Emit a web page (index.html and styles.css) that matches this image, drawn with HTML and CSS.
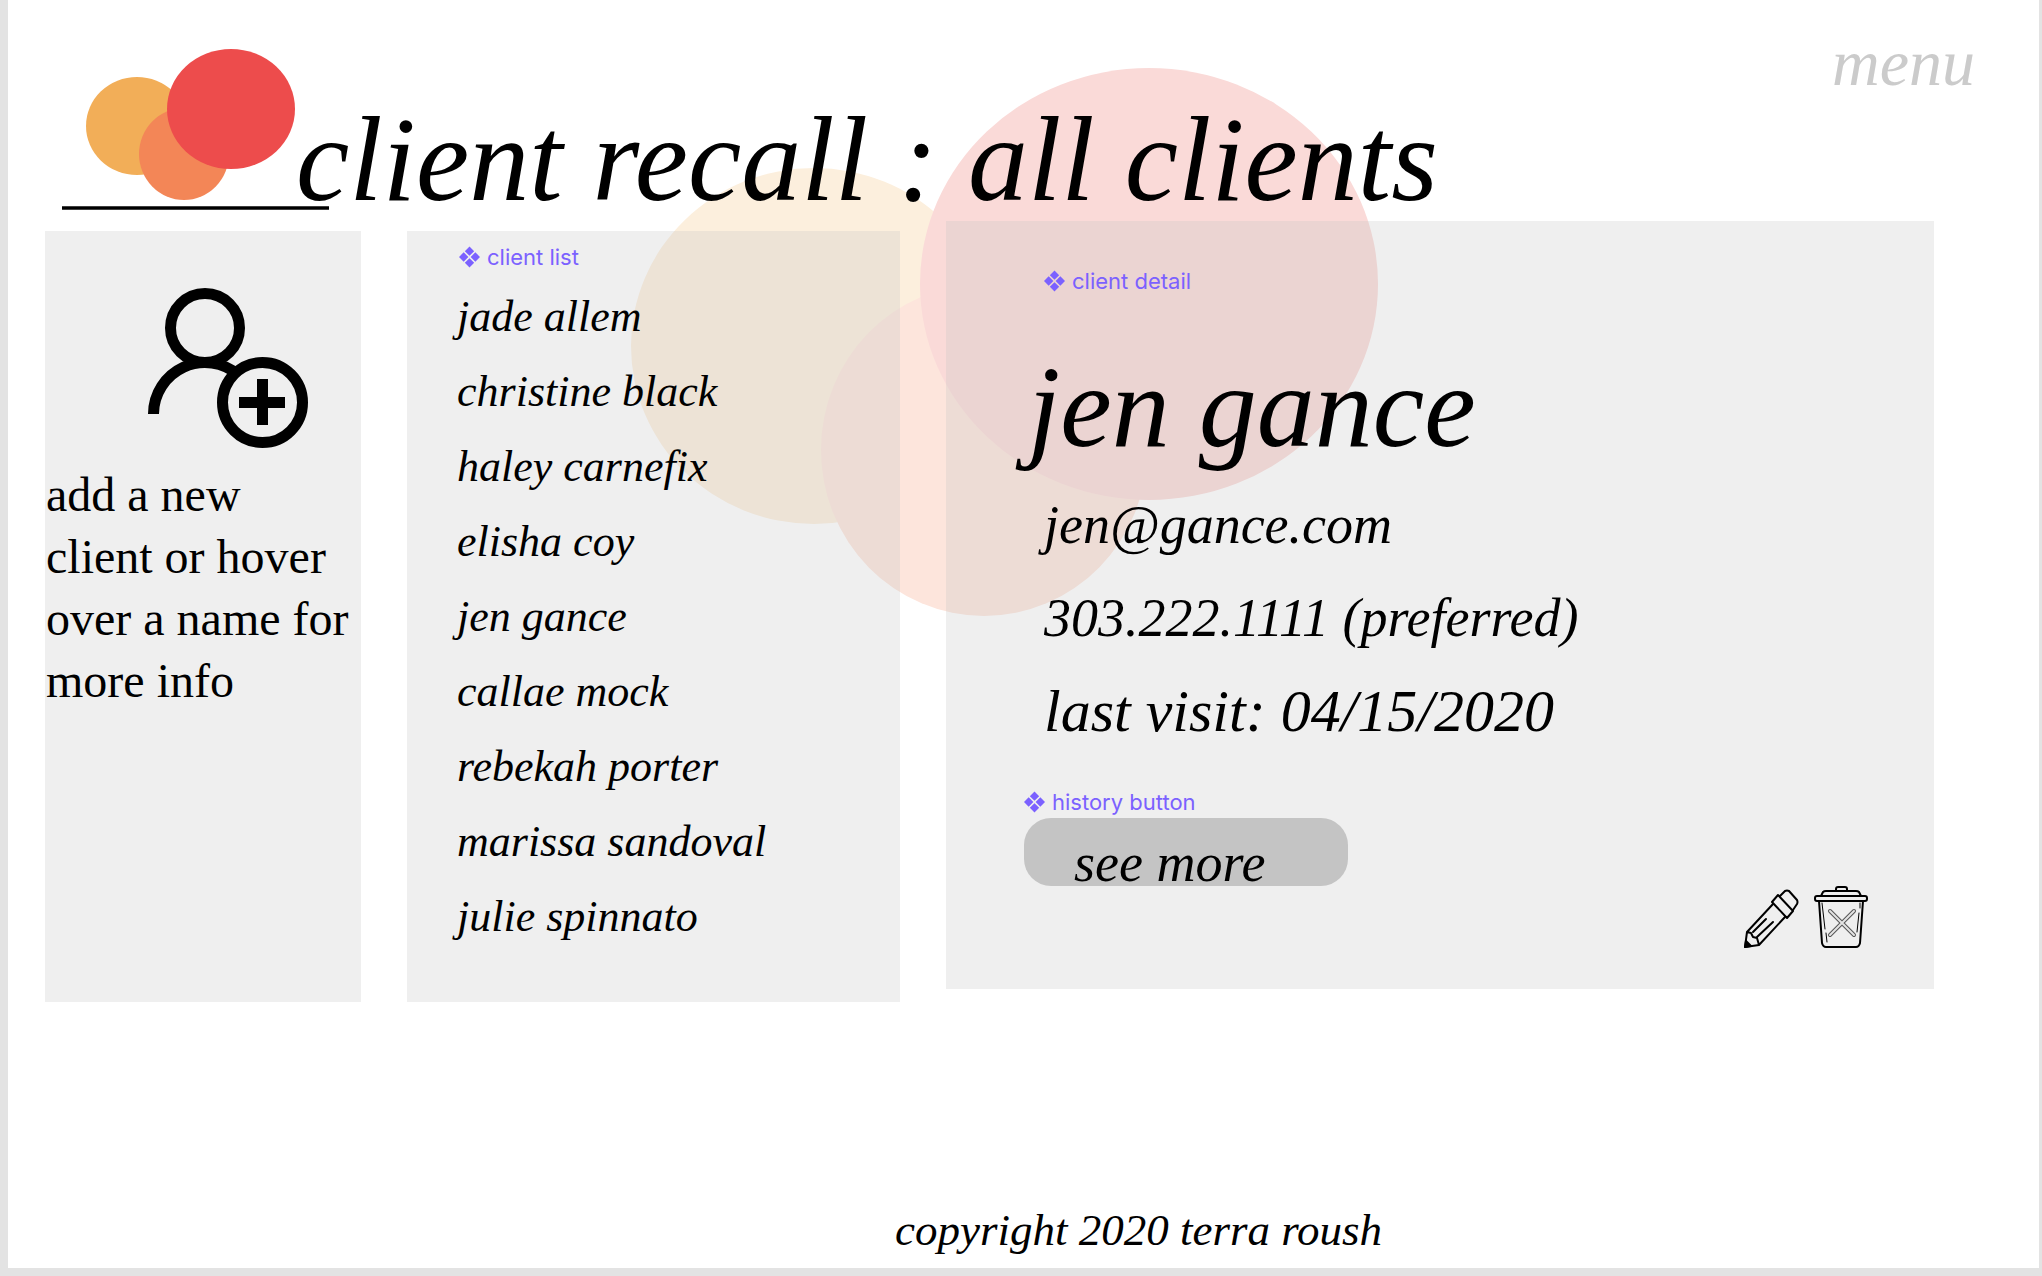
FILE: index.html
```html
<!DOCTYPE html>
<html lang="en">
<head>
<meta charset="utf-8">
<title>client recall : all clients</title>
<link rel="stylesheet" href="styles.css">
</head>
<body>
<svg width="0" height="0" class="defs" aria-hidden="true">
  <symbol id="component" viewBox="0 0 22 22">
    <path d="M11 0l4.900 4.900L11 9.800 6.100 4.900zM11 12.200l4.900 4.900L11 22l-4.900-4.900zM4.900 6.100L9.800 11l-4.900 4.900L0 11zM17.100 6.100L22 11l-4.900 4.900L12.200 11z"/>
  </symbol>
</svg>
<div class="page">
  <svg class="backdrop" viewBox="0 0 760 560" aria-hidden="true">
    <ellipse cx="185" cy="286" rx="183" ry="178" fill="#fcefdd"/>
    <ellipse cx="355" cy="390" rx="163" ry="166" fill="#fde5dc"/>
    <ellipse cx="520" cy="224" rx="229" ry="216" fill="#fadad8"/>
  </svg>
  <header class="header">
    <svg class="logo" viewBox="0 0 268 164" role="img" aria-label="client recall logo">
      <ellipse cx="75" cy="78" rx="51" ry="49" fill="#f2ae58"/>
      <ellipse cx="122" cy="106" rx="45" ry="46" fill="#f38657"/>
      <ellipse cx="169" cy="61" rx="64" ry="60" fill="#ed4c4c"/>
      <path d="M0 160h267" stroke="#000" stroke-width="3.400"/>
    </svg>
    <h1 class="title">client recall : all clients</h1>
    <a class="menu" href="#menu">menu</a>
  </header>
  <main class="board">
    <section class="panel intro">
      <button class="add" type="button" aria-label="add client">
        <svg viewBox="0 0 164 164" width="164" height="164" fill="none" stroke="#000" stroke-width="11">
          <circle cx="59" cy="42" r="34.500"/>
          <path d="M7.500 128a51.500 51.500 0 0 1 85-39"/>
          <circle cx="116.500" cy="116.500" r="40"/>
          <path d="M93 116.500h46M116.500 93v46"/>
        </svg>
      </button>
      <p class="hint">add a new client or hover over a name for more info</p>
    </section>
    <section class="panel list">
      <h2 class="tag"><svg><use href="#component"/></svg>client list</h2>
      <ul class="names">
        <li>jade allem</li>
        <li>christine black</li>
        <li>haley carnefix</li>
        <li>elisha coy</li>
        <li>jen gance</li>
        <li>callae mock</li>
        <li>rebekah porter</li>
        <li>marissa sandoval</li>
        <li>julie spinnato</li>
      </ul>
    </section>
    <section class="panel detail">
      <h2 class="tag"><svg><use href="#component"/></svg>client detail</h2>
      <div class="name">jen gance</div>
      <div class="facts">
        <div>jen@gance.com</div>
        <div>303.222.1111 (preferred)</div>
        <div class="visit">last visit: 04/15/2020</div>
      </div>
      <div class="history">
        <h2 class="tag"><svg><use href="#component"/></svg>history button</h2>
        <button class="more" type="button">see more</button>
      </div>
      <div class="actions">
        <button type="button" aria-label="edit client">
          <svg viewBox="0 0 56 62" width="56" height="62" fill="none" stroke="#000" stroke-width="2" stroke-linejoin="round" stroke-linecap="round">
            <path d="M3 46L29 18M41 31L15 59L1 61L3 46l4 1 2 4 4 1 2 7"/>
            <path d="M9 46l13-13M13 51l16-15"/>
            <path d="M28 16l6-7 15 16-6 7zM36 10l5-5q2-1 4 0l8 9q1 2 0 4l-4 6"/>
            <path d="M2 55l5 5-6 1z" fill="#000"/>
          </svg>
        </button>
        <button type="button" aria-label="delete client">
          <svg viewBox="0 0 56 62" width="56" height="62" fill="none" stroke="#000" stroke-width="2" stroke-linejoin="round" stroke-linecap="round">
            <path d="M22 5V3q0-2 2-2h7q2 0 2 2v2M7 10l2-4q1-1 3-1h30q2 0 3 1l2 4"/>
            <rect x="1" y="10" width="52" height="5" rx="2"/>
            <path d="M5 15l3 42q1 4 4 4h30q3 0 4-4l3-42"/>
            <path d="M8 17l3 26M12 47l1 9M45 27l-2 19M46 17v5" stroke-width="1"/>
            <path d="M16 25l24 24M40 25L16 49" stroke-width="4" stroke="#555"/>
            <path d="M16 25l24 24M40 25L16 49" stroke-width="2" stroke="#e4e4e4"/>
          </svg>
        </button>
      </div>
    </section>
  </main>
  <footer class="footer">copyright 2020 terra roush</footer>
</div>
</body>
</html>
```
FILE: styles.css
```css
* { box-sizing: border-box; }

body {
  margin: 0;
  padding: 0 3px 8px 8px;
  background: #e3e3e3;
  color: #000;
  font-family: "Liberation Serif", serif;
}

h1, h2, p, ul { margin: 0; padding: 0; font-weight: 400; }

button { padding: 0; border: 0; background: none; color: inherit; font: inherit; cursor: pointer; }

svg { display: block; }

.defs { position: absolute; }

.page {
  position: relative;
  display: flex;
  flex-direction: column;
  min-height: calc(100vh - 8px);
  background: #fff;
}

.backdrop { position: absolute; top: 60px; left: 621px; width: 760px; height: 560px; }

.header, .board, .footer { position: relative; }

.header { display: flex; align-items: flex-start; height: 221px; padding: 48px 64px 0 54px; }

.logo { flex: none; width: 268px; height: 164px; margin-right: -34px; }

.title, .name, .names, .facts, .menu, .more, .footer { font-style: italic; }

.title { flex: 1; padding-top: 44px; font-size: 120px; line-height: 136px; white-space: nowrap; }

.menu { color: #cbcbcb; font-size: 66px; line-height: 30px; text-decoration: none; }

.board {
  display: grid;
  grid-template-columns: 316fr 493fr 988fr;
  gap: 46px;
  align-items: start;
  padding: 0 105px 0 37px;
}

.panel { min-width: 0; background: rgba(196, 196, 196, 0.27); }

.intro, .list { min-height: 771px; margin-top: 10px; }

.intro { padding: 55px 0 0 1px; }

.add { display: block; margin-left: 100px; }

.hint { padding: 14px 8px 0 0; font-size: 48px; line-height: 62px; }

.tag {
  display: flex;
  align-items: center;
  gap: 7px;
  color: #7b61ff;
  font: 400 22px/28px Inter, sans-serif;
}

.tag svg { width: 21px; height: 22px; fill: currentColor; }

.list { padding: 12px 0 0 50px; }

.list .tag { padding-left: 2px; }

.names { padding-top: 8px; font-size: 44px; line-height: 75px; list-style: none; white-space: nowrap; }

.detail { min-height: 768px; padding: 46px 64px 32px 98px; }

.name { margin-left: -16px; padding-top: 43px; font-size: 116px; line-height: 139px; }

.facts { padding-top: 2px; font-size: 54px; line-height: 93px; white-space: nowrap; }

.visit { font-size: 60px; }

.history { margin: 30px 0 0 -20px; }

.more {
  display: block;
  width: 324px;
  height: 68px;
  margin-top: 2px;
  padding: 22px 0 0 50px;
  border-radius: 27px;
  background: #c4c4c4;
  font-size: 54px;
  line-height: 46px;
  text-align: left;
}

.actions { display: flex; justify-content: flex-end; gap: 14px; }

.footer { margin-top: auto; padding: 0 0 13px 887px; font-size: 45px; line-height: 50px; }
```
